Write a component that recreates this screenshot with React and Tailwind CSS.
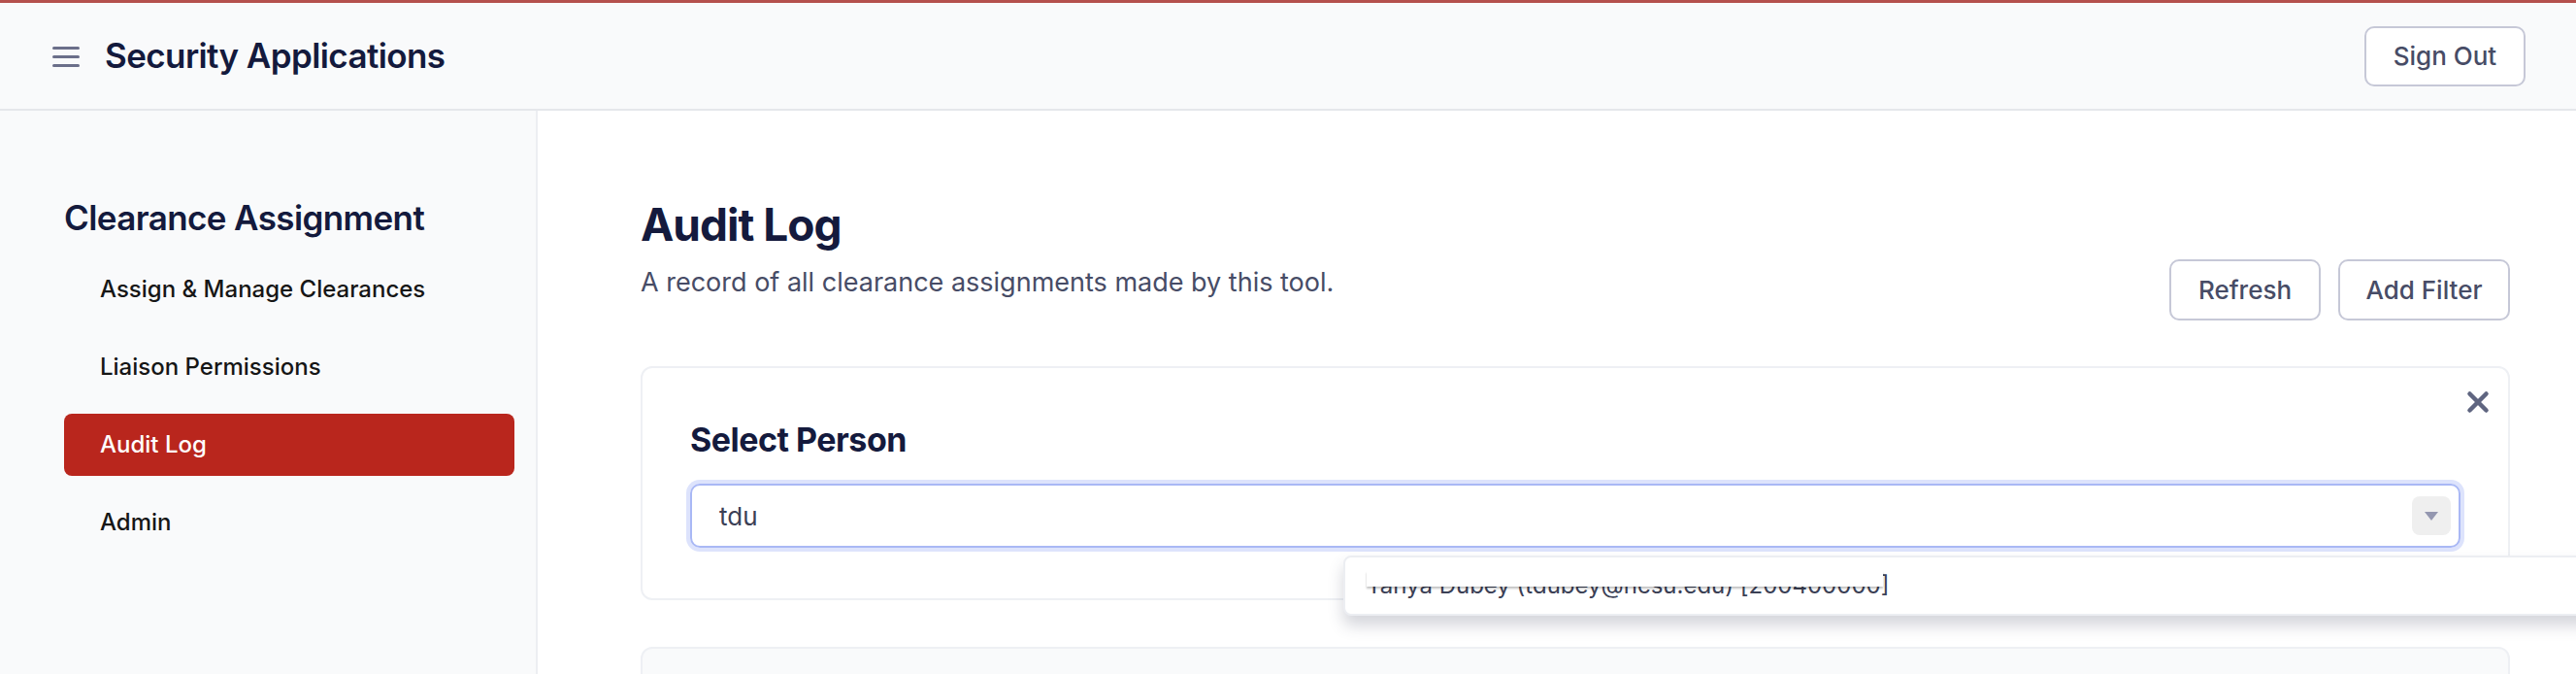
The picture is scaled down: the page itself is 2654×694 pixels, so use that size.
import { X } from "lucide-react";

const navItems = [
  { label: "Assign & Manage Clearances" },
  { label: "Liaison Permissions" },
  { label: "Audit Log", active: true },
  { label: "Admin" },
];

function Header() {
  return (
    <header className="flex h-[114px] shrink-0 items-center justify-between border-t-[3px] border-b-2 border-t-[#b4504d] border-b-[#e5e7eb] bg-[#f9fafb] pl-[54px] pr-[52px]">
      <div className="flex items-center gap-[26px]">
        <svg width="28" height="26" viewBox="0 0 28 26" className="text-[#6b6f8a]">
          <rect x="0" y="3" width="28" height="3" rx="1.5" fill="currentColor" />
          <rect x="0" y="12" width="28" height="3" rx="1.5" fill="currentColor" />
          <rect x="0" y="21" width="28" height="3" rx="1.5" fill="currentColor" />
        </svg>
        <h1 className="text-[35px] font-semibold tracking-[-0.6px] text-[#141a3d]">Security Applications</h1>
      </div>
      <button className="h-[62px] w-[166px] rounded-[10px] border-2 border-[#c6c8d7] bg-white text-[26px] font-medium text-[#474c66]">
        Sign Out
      </button>
    </header>
  );
}

function Sidebar() {
  return (
    <aside className="w-[554px] shrink-0 border-r-2 border-[#eceef2] bg-[#f9fafb] pl-[66px] pr-[22px] pt-[89px]">
      <h2 className="text-[35px] font-semibold leading-[1.2] tracking-[-0.6px] text-[#141a3d]">Clearance Assignment</h2>
      <nav className="mt-[21px] flex flex-col gap-[16px]">
        {navItems.map((item) => (
          <a
            key={item.label}
            className={
              item.active
                ? "flex h-[64px] items-center rounded-[8px] bg-[#b9261d] pl-[37px] text-[24px] font-medium text-white"
                : "flex h-[64px] items-center rounded-[8px] pl-[37px] text-[24px] font-medium text-[#161616]"
            }
          >
            {item.label}
          </a>
        ))}
      </nav>
    </aside>
  );
}

function PersonPicker() {
  return (
    <div className="relative rounded-[12px] border-2 border-[#eef0f4] bg-white px-[49px] pb-[52px] pt-[48px]">
      <button className="absolute right-[14px] top-[18px] text-[#5f6580]">
        <X size={34} strokeWidth={3.2} />
      </button>
      <h3 className="text-[34px] font-bold tracking-[-0.5px] text-[#141a3d]">Select Person</h3>
      <div className="relative mt-[20px]">
        <div className="flex h-[66px] items-center rounded-[10px] border-2 border-[#a9b8f5] pl-[28px] pr-[8px] ring-4 ring-[#dde3fc]">
          <span className="flex-1 text-[26px] text-[#3b4055]">tdu</span>
          <span className="flex h-[40px] w-[40px] items-center justify-center rounded-[8px] bg-[#efefef]">
            <svg width="14" height="9" viewBox="0 0 14 9">
              <path d="M0 0 L14 0 L7 9 Z" fill="#9497b0" />
            </svg>
          </span>
        </div>
        <div className="absolute left-[673px] top-[74px] z-10 flex h-[62px] w-[1400px] items-center rounded-[8px] border-2 border-[#eceef2] bg-white pl-[22px] shadow-[0_10px_16px_rgba(60,64,90,0.22)]">
          <span className="relative text-[24px] text-[#3b4055]">
            Tanya Dubey (tdubey@ncsu.edu) [200400000]
            <span className="absolute left-0 right-[6px] top-[3px] h-[16px] bg-white shadow-[0_2px_2px_rgba(0,0,0,0.25)]"></span>
          </span>
        </div>
      </div>
    </div>
  );
}

export default function App() {
  return (
    <div className="flex h-screen w-screen flex-col overflow-hidden bg-white font-['Inter',sans-serif]">
      <Header />
      <div className="flex min-h-0 flex-1">
        <Sidebar />
        <main className="min-w-0 flex-1 pl-[106px] pr-[68px] pt-[92px]">
          <div className="flex items-start justify-between">
            <div>
              <h2 className="text-[46px] font-bold leading-[1.1] tracking-[-1px] text-[#141a3d]">Audit Log</h2>
              <p className="mt-[14px] text-[27px] text-[#474c66]">A record of all clearance assignments made by this tool.</p>
            </div>
            <div className="flex gap-[18px] pt-[61px]">
              <button className="h-[63px] w-[156px] rounded-[10px] border-2 border-[#c6c8d7] bg-white text-[26px] font-medium text-[#474c66]">
                Refresh
              </button>
              <button className="h-[63px] w-[177px] rounded-[10px] border-2 border-[#c6c8d7] bg-white text-[26px] font-medium text-[#474c66]">
                Add Filter
              </button>
            </div>
          </div>
          <div className="mt-[47px]">
            <PersonPicker />
          </div>
          <div className="mt-[48px] h-[200px] rounded-[12px] border-2 border-[#eef0f4] bg-[#f9fafb]"></div>
        </main>
      </div>
    </div>
  );
}
